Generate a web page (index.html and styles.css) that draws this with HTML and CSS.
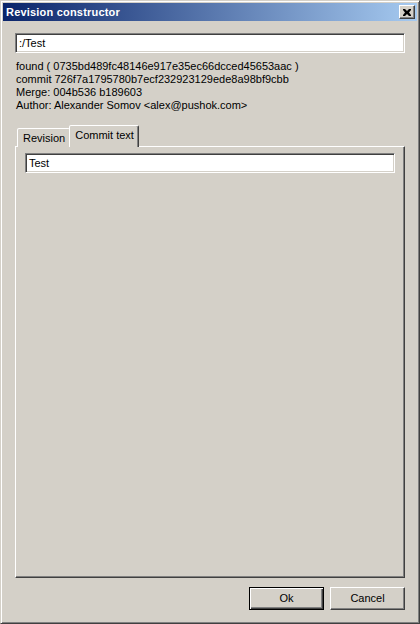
FILE: index.html
```html
<!DOCTYPE html>
<html>
<head>
<meta charset="utf-8">
<link rel="stylesheet" href="styles.css">
</head>
<body>
<div class="window">
  <div class="titlebar">
    <span class="title">Revision constructor</span>
    <div class="close">
      <svg width="8" height="7" viewBox="0 0 8 7"><path d="M0 0h2l2 2 2-2h2v1l-2 2.5 2 2.5v1h-2l-2-2-2 2h-2v-1l2-2.5-2-2.5z" fill="#000"/></svg>
    </div>
  </div>
  <div class="body">
    <div class="edit">:/Test</div>
    <div class="info">
      <div>found ( 0735bd489fc48146e917e35ec66dcced45653aac )</div>
      <div>commit 726f7a1795780b7ecf232923129ede8a98bf9cbb</div>
      <div>Merge: 004b536 b189603</div>
      <div>Author: Alexander Somov &lt;alex@pushok.com&gt;</div>
    </div>
    <div class="tabs">
      <div class="tabbar">
        <div class="tab">Revision</div>
        <div class="tab active">Commit text</div>
      </div>
      <div class="pane">
        <div class="edit">Test</div>
      </div>
    </div>
    <div class="buttons">
      <div class="btn default"><span class="btn-in">Ok</span></div>
      <div class="btn"><span class="btn-in">Cancel</span></div>
    </div>
  </div>
</div>
</body>
</html>
```
FILE: styles.css
```css
* { box-sizing: border-box; }
html, body { margin: 0; padding: 0; background: #d4d0c8; }
body {
  font-family: "Liberation Sans", Arial, sans-serif;
  font-size: 11px;
  color: #000;
}
.window {
  width: 420px;
  height: 624px;
  background: #d4d0c8;
  border: 1px solid;
  border-color: #d4d0c8 #404040 #404040 #d4d0c8;
  box-shadow: inset 1px 1px #fff, inset -1px -1px #808080;
  padding: 2px;
  display: flex;
  flex-direction: column;
}
.titlebar {
  height: 18px;
  flex: none;
  background: linear-gradient(to right, #0a246a, #a6caf0);
  display: flex;
  align-items: center;
  justify-content: space-between;
  padding: 0 2px 0 2px;
}
.title {
  color: #fff;
  font-weight: bold;
  font-size: 11px;
  letter-spacing: 0.2px;
  padding-left: 1px;
}
.close {
  width: 16px;
  height: 14px;
  background: #d4d0c8;
  border: 1px solid;
  border-color: #fff #404040 #404040 #fff;
  box-shadow: inset -1px -1px #808080;
  display: flex;
  align-items: center;
  justify-content: center;
  padding-right: 1px;
}
.close svg { display: block; }
.body {
  flex: 1;
  display: flex;
  flex-direction: column;
  padding: 12px 12px 11px 12px;
}
.edit {
  height: 20px;
  background: #fff;
  border: 1px solid;
  border-color: #808080 #fff #fff #808080;
  box-shadow: inset 1px 1px #404040, inset -1px -1px #d4d0c8;
  padding: 3px 3px 0 3px;
  line-height: 13px;
  flex: none;
}
.info {
  margin-top: 7px;
  line-height: 13px;
  padding-left: 1px;
}
.tabs {
  margin-top: 13px;
  flex: 1;
  display: flex;
  flex-direction: column;
}
.tabbar {
  display: flex;
  align-items: flex-end;
  height: 22px;
  padding-left: 2px;
  position: relative;
  z-index: 1;
  margin-bottom: -1px;
}
.tab {
  height: 19px;
  border: 1px solid;
  border-bottom: none;
  border-color: #fff #404040 transparent #fff;
  box-shadow: inset -1px 0 #808080;
  border-radius: 2px 2px 0 0;
  padding: 3px 5px 0 5px;
  background: #d4d0c8;
  font-size: 11px;
}
.tab.active {
  height: 22px;
  padding: 3px 4px 0 5px;
  margin-left: -1px;
}
.tab:first-child { border-right: none; box-shadow: none; padding-right: 5px; }
.pane {
  flex: 1;
  border: 1px solid;
  border-color: #fff #404040 #404040 #fff;
  box-shadow: inset -1px -1px #808080;
  padding: 6px 9px 0 9px;
}
.buttons {
  display: flex;
  justify-content: flex-end;
  gap: 6px;
  margin-top: 9px;
}
.btn {
  width: 75px;
  height: 23px;
  border: 1px solid;
  border-color: #fff #404040 #404040 #fff;
  box-shadow: inset -1px -1px #808080;
  display: flex;
  align-items: center;
  justify-content: center;
}
.btn.default {
  border: 1px solid #000;
  box-shadow: inset 1px 1px #fff, inset -1px -1px #404040, inset -2px -2px #808080;
}
.btn-in { line-height: 13px; }
```
